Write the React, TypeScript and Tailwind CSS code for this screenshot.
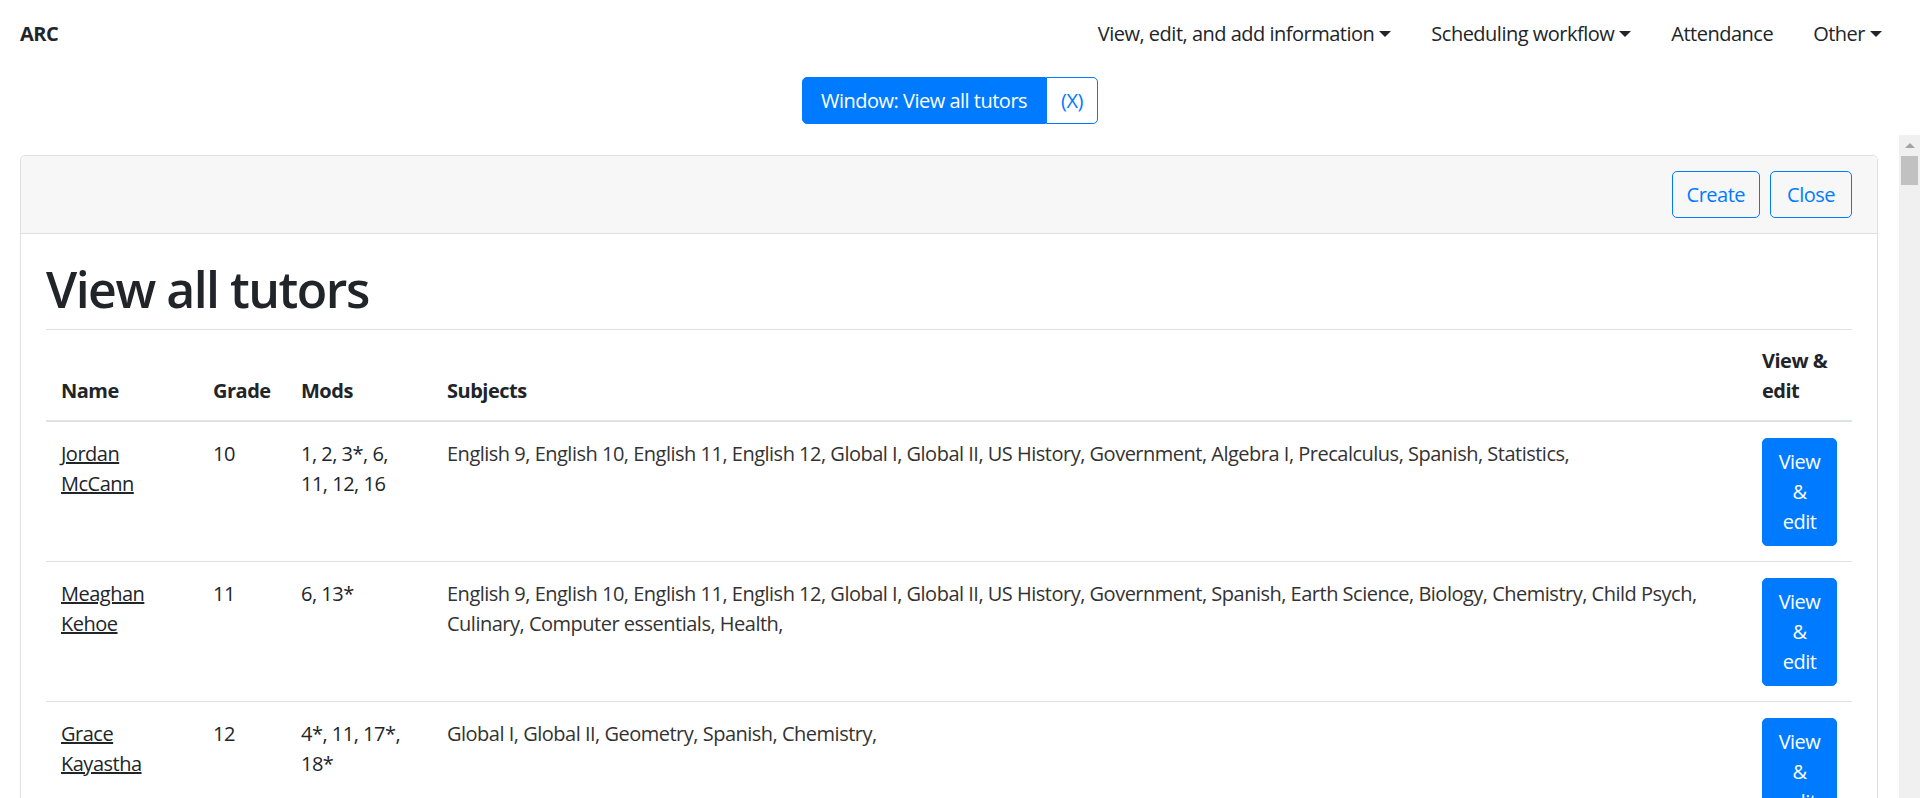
import React from 'react';

interface Tutor {
  name: string[];
  grade: string;
  mods: string[];
  subjects: string[];
}

const tutors: Tutor[] = [
  {
    name: ['Jordan', 'McCann'],
    grade: '10',
    mods: ['1, 2, 3*, 6,', '11, 12, 16'],
    subjects: [
      'English 9, English 10, English 11, English 12, Global I, Global II, US History, Government, Algebra I, Precalculus, Spanish, Statistics,',
    ],
  },
  {
    name: ['Meaghan', 'Kehoe'],
    grade: '11',
    mods: ['6, 13*'],
    subjects: [
      'English 9, English 10, English 11, English 12, Global I, Global II, US History, Government, Spanish, Earth Science, Biology, Chemistry, Child Psych,',
      'Culinary, Computer essentials, Health,',
    ],
  },
  {
    name: ['Grace', 'Kayastha'],
    grade: '12',
    mods: ['4*, 11, 17*,', '18*'],
    subjects: ['Global I, Global II, Geometry, Spanish, Chemistry,'],
  },
];

const Caret = () => (
  <span className="ml-[5px] inline-block align-[4px] border-x-[6px] border-t-[6px] border-x-transparent border-t-[#212529]" />
);

const NavItem = ({ label, dropdown }: { label: string; dropdown?: boolean }) => (
  <a href="#" className="px-[20px] leading-[30px] text-[#212529] whitespace-nowrap">
    {label}
    {dropdown && <Caret />}
  </a>
);

export default function App() {
  return (
    <div className="h-screen flex flex-col bg-white text-[20px] leading-[30px] tracking-[-0.5px] text-[#212529] font-['Open_Sans',sans-serif] overflow-hidden">
      {/* Navbar */}
      <nav className="h-[67px] shrink-0 flex items-center justify-between px-[20px]">
        <span className="font-bold text-[20px]">ARC</span>
        <div className="flex items-center -mr-[2px]">
          <NavItem label="View, edit, and add information" dropdown />
          <NavItem label="Scheduling workflow" dropdown />
          <NavItem label="Attendance" />
          <NavItem label="Other" dropdown />
        </div>
      </nav>

      {/* Window tab */}
      <div className="shrink-0 flex justify-center pr-[20px] mt-[10px] mb-[11px]">
        <div className="flex h-[47px]">
          <button className="px-[18px] bg-[#007bff] text-white border border-[#007bff] rounded-l-[5px]">
            Window: View all tutors
          </button>
          <button className="px-[14px] bg-white text-[#007bff] border border-[#007bff] rounded-r-[5px]">
            (X)
          </button>
        </div>
      </div>

      {/* Scroll area */}
      <div className="flex-1 min-h-0 flex">
        <div className="flex-1 min-w-0 overflow-hidden pt-[20px] pl-[20px] pr-[21px]">
          <div className="border border-[#dfdfdf] rounded-[5px]">
            <div className="flex justify-end gap-[10px] px-[25px] py-[15px] bg-[#f7f7f7] border-b border-[#dfdfdf] rounded-t-[5px]">
              <button className="h-[47px] px-[14px] text-[#007bff] border border-[#007bff] rounded-[5px]">Create</button>
              <button className="h-[47px] px-[16px] text-[#007bff] border border-[#007bff] rounded-[5px]">Close</button>
            </div>
            <div className="p-[25px]">
              <h1 className="text-[50px] leading-[60px] font-semibold tracking-[-1.5px] mb-[10px]">View all tutors</h1>
              <table className="w-full border-collapse table-fixed">
                <colgroup>
                  <col className="w-[152px]" />
                  <col className="w-[88px]" />
                  <col className="w-[146px]" />
                  <col />
                  <col className="w-[105px]" />
                </colgroup>
                <thead>
                  <tr className="text-left align-bottom font-bold">
                    <th className="px-[15px] pt-[16px] pb-[14px] border-t border-b-2 border-[#dee2e6]">Name</th>
                    <th className="px-[15px] pt-[16px] pb-[14px] border-t border-b-2 border-[#dee2e6]">Grade</th>
                    <th className="px-[15px] pt-[16px] pb-[14px] border-t border-b-2 border-[#dee2e6]">Mods</th>
                    <th className="px-[15px] pt-[16px] pb-[14px] border-t border-b-2 border-[#dee2e6]">Subjects</th>
                    <th className="px-[15px] pt-[16px] pb-[14px] border-t border-b-2 border-[#dee2e6]">
                      View &amp;
                      <br />
                      edit
                    </th>
                  </tr>
                </thead>
                <tbody>
                  {tutors.map((t, i) => (
                    <tr key={i} className="align-top">
                      <td className="px-[15px] pt-[17px] pb-[15px] border-t border-[#dee2e6]">
                        <a href="#" className="underline text-[#212529]">
                          {t.name[0]}
                          <br />
                          {t.name[1]}
                        </a>
                      </td>
                      <td className="px-[15px] pt-[17px] pb-[15px] border-t border-[#dee2e6]">{t.grade}</td>
                      <td className="px-[15px] pt-[17px] pb-[15px] border-t border-[#dee2e6]">
                        {t.mods.map((m, j) => (
                          <div key={j} className="whitespace-nowrap">{m}</div>
                        ))}
                      </td>
                      <td className="px-[15px] pt-[17px] pb-[15px] border-t border-[#dee2e6] text-[#333]">
                        {t.subjects.map((s, j) => (
                          <div key={j} className="whitespace-nowrap">{s}</div>
                        ))}
                      </td>
                      <td className="px-[15px] pt-[16px] pb-[15px] border-t border-[#dee2e6]">
                        <button className="w-[75px] py-[8px] bg-[#007bff] text-white border border-[#007bff] rounded-[5px] text-center">
                          View
                          <br />
                          &amp;
                          <br />
                          edit
                        </button>
                      </td>
                    </tr>
                  ))}
                </tbody>
              </table>
            </div>
          </div>
        </div>

        {/* Scrollbar */}
        <div className="w-[21px] shrink-0 bg-[#f0f0f0] flex flex-col items-center">
          <div className="h-[21px] flex items-center justify-center">
            <div className="border-x-[5px] border-b-[5px] border-x-transparent border-b-[#a3a3a3]" />
          </div>
          <div className="w-[17px] h-[29px] bg-[#c1c1c1]" />
        </div>
      </div>
    </div>
  );
}
